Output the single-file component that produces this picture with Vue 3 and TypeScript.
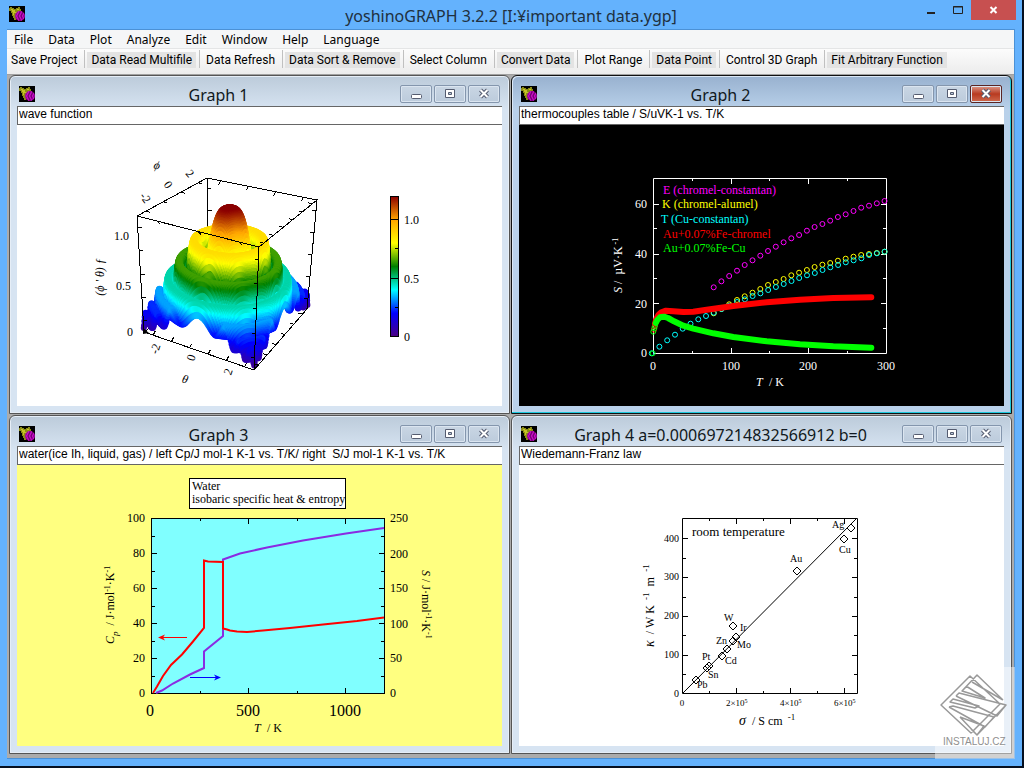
<script setup lang="ts">
import { ref } from 'vue'

type Pt = [number, number]

const menus = ['File', 'Data', 'Plot', 'Analyze', 'Edit', 'Window', 'Help', 'Language']
const tools = [
  'Save Project', 'Data Read Multifile', 'Data Refresh', 'Data Sort & Remove', 'Select Column',
  'Convert Data', 'Plot Range', 'Data Point', 'Control 3D Graph', 'Fit Arbitrary Function',
]
const graphs = ref([
  { id: 1, title: 'Graph 1', note: 'wave function', active: false },
  { id: 2, title: 'Graph 2', note: 'thermocouples table / S/uVK-1 vs. T/K', active: true },
  { id: 3, title: 'Graph 3', note: 'water(ice Ih, liquid, gas) / left Cp/J mol-1 K-1 vs. T/K/ right  S/J mol-1 K-1 vs. T/K', active: false },
  { id: 4, title: 'Graph 4 a=0.000697214832566912 b=0', note: 'Wiedemann-Franz law', active: false },
])

const line = (p: Pt[]) => p.map((q) => q.join(',')).join(' ')

/* ---------- Graph 1: surface ---------- */
const top: Record<string, Pt> = { d: [120, 91], a: [190, 53], b: [300, 75], c: [242, 122] }
const bot: Record<string, Pt> = { d: [127, 207], a: [192, 161], b: [290, 184], c: [237, 245] }

/* u runs along theta, v along phi, both 0..1; z is the height 0..1.2 */
function project(u: number, v: number, z: number): Pt {
  const t = z / 1.2
  const at = (k: string, i: number) => bot[k][i] + (top[k][i] - bot[k][i]) * t
  const mix = (i: number) =>
    at('d', i) * (1 - u) * (1 - v) + at('c', i) * u * (1 - v) + at('a', i) * (1 - u) * v + at('b', i) * u * v
  return [Math.round(mix(0) * 10) / 10, Math.round(mix(1) * 10) / 10]
}
function table(x: number, xs: number[], ys: number[]): number {
  for (let i = 1; i < xs.length; i++) {
    if (x <= xs[i]) return ys[i - 1] + ((ys[i] - ys[i - 1]) * (x - xs[i - 1])) / (xs[i] - xs[i - 1])
  }
  return ys[ys.length - 1]
}
const rr = [0, 0.3, 0.6, 0.9, 1.2, 1.6, 2]
function height(u: number, v: number): number {
  const q = (2 * u - 1) ** 2 + (2 * v - 1) ** 2
  const crest = table(q, rr, [1.22, 0.88, 0.66, 0.48, 0.34, 0.22, 0.16])
  const depth = table(q, rr, [0.6, 0.42, 0.27, 0.2, 0.17, 0.14, 0.12])
  return crest - (depth * (1 - Math.cos((2 * Math.PI * q) / 0.31))) / 2
}
const stops = [[75, 0, 130], [0, 0, 255], [0, 255, 255], [0, 128, 0], [255, 255, 0], [255, 165, 0], [139, 0, 0]]
function colour(z: number): string {
  const k = Math.min(5.999, Math.max(0, z / 0.2))
  const i = Math.floor(k)
  return `rgb(${stops[i].map((c, n) => Math.round(c + (stops[i + 1][n] - c) * (k - i))).join(',')})`
}
/* back-to-front dots, thick enough to close the surface */
const N = 130
const dots: { p: Pt; c: string }[] = []
for (let k = -N; k <= N; k++) {
  for (let i = Math.max(0, k); i <= Math.min(N, N + k); i++) {
    const j = i - k
    const z = height(i / N, j / N)
    dots.push({ p: project(i / N, j / N, z), c: colour(z) })
  }
}
function ticks(from: Pt, to: Pt, dir: Pt, n: number): string {
  let s = ''
  for (let i = 0; i < n; i++) {
    const f = (i + 0.5) / n
    const x = from[0] + (to[0] - from[0]) * f
    const y = from[1] + (to[1] - from[1]) * f
    s += `M${x.toFixed(1)},${y.toFixed(1)}l${dir[0]},${dir[1]}`
  }
  return s
}
const backTicks = ticks(top.d, top.a, [4, 1], 4) + ticks(top.a, top.b, [-2, 4], 4) + ticks(top.a, bot.a, [4, 0], 5)
const frontTicks =
  ticks(top.d, top.c, [3, 3], 3) + ticks(top.c, top.b, [-4, -1], 6) + ticks(top.c, bot.c, [-4, 0], 5) +
  ticks(top.d, bot.d, [4, 0], 5) + ticks(top.b, bot.b, [-4, 0], 5) +
  ticks(bot.d, bot.c, [2, -4], 6) + ticks(bot.c, bot.b, [-4, -1], 6)

/* ---------- Graph 2: thermocouples, points in thirds of a pixel ---------- */
const g2 = (x: number, y: number): Pt => [Math.round((x / 3 + 81) * 10) / 10, Math.round((y / 3 + 40) * 10) / 10]
const series = (x0: number, ys: number[]) => ys.map((y, i) => g2(x0 + i * 23.3, y))
const eType = series(341, [367, 349, 333, 317, 300, 286, 272, 258, 245, 232, 220, 210, 197, 186, 177, 167, 156, 148, 138, 128, 122, 115, 108])
const kType = series(341, [445, 432, 418, 405, 394, 383, 372, 360, 351, 342, 331, 323, 315, 306, 299, 294, 287, 281, 275, 270, 267, 264, 260])
const tType = series(155, [565, 545, 526, 509, 491, 476, 463, 453, 443, 432, 422, 411, 403, 393, 385, 375, 366, 357, 348, 339, 331, 324, 315, 307, 300, 292, 286, 280, 270, 265, 260])
const pts2 = (p: Pt[]) => line(p.map(([x, y]) => g2(x, y)))
const redLine = pts2([[165, 476], [169, 462], [175, 450], [184, 442], [198, 437], [220, 439], [250, 441], [280, 440], [320, 434], [400, 423], [500, 412], [600, 404], [700, 399], [814, 397]])
const greenLine = pts2([[167, 474], [172, 465], [180, 457], [192, 455], [204, 459], [222, 469], [250, 482], [280, 491], [340, 505], [400, 516], [500, 529], [600, 538], [700, 544], [814, 548]])
const thermo = [
  { c: '#ff00ff', pts: eType },
  { c: '#ffff00', pts: kType },
  { c: '#00ffff', pts: tType },
  { c: '#ff0000', pts: [g2(162, 494), g2(164, 484)] },
  { c: '#00ff00', pts: [g2(158, 565), g2(160, 500), g2(163, 490), g2(165, 482)] },
]
const legend = [
  { t: 'E (chromel-constantan)', c: '#ff00ff', x: 144, y: 69 },
  { t: 'K (chromel-alumel)', c: '#ffff00', x: 143, y: 83 },
  { t: 'T (Cu-constantan)', c: '#00ffff', x: 142, y: 98 },
  { t: 'Au+0.07%Fe-chromel', c: '#ff0000', x: 144, y: 113 },
  { t: 'Au+0.07%Fe-Cu', c: '#00ff00', x: 144, y: 127 },
]

/* ---------- Graph 3: water ---------- */
const g3 = (p: Pt[]) => line(p.map(([x, y]): Pt => [Math.round(x / 3 + 73), Math.round((y / 3 + 5) * 2) / 2]))
const entropy = g3([[198, 669], [215, 662], [250, 640], [300, 614], [342, 594], [342, 545], [399, 498], [399, 269], [450, 251], [530, 232], [640, 211], [767, 190], [883, 174]])
const heat = g3([[190, 669], [200, 650], [220, 618], [244, 585], [275, 553], [310, 515], [342, 474], [342, 272], [355, 275], [399, 276], [399, 476], [412, 478], [420, 482], [440, 485], [470, 486], [520, 481], [600, 474], [700, 464], [800, 453], [883, 442]])

/* ---------- Graph 4: metals ---------- */
const metals = [
  { t: 'Ag', x: 332, y: 63, lx: 313, ly: 63 }, { t: 'Cu', x: 325, y: 74, lx: 320, ly: 88 },
  { t: 'Au', x: 278, y: 106, lx: 271, ly: 97 }, { t: 'W', x: 214, y: 161, lx: 205, ly: 156 },
  { t: 'Ir', x: 217, y: 172, lx: 221, ly: 166 }, { t: 'Zn', x: 208, y: 184, lx: 197, ly: 179 },
  { t: 'Mo', x: 214, y: 176, lx: 218, ly: 183 }, { t: 'Cd', x: 203, y: 191, lx: 206, ly: 199 },
  { t: 'Pt', x: 190, y: 201, lx: 183, ly: 195 }, { t: 'Sn', x: 188, y: 203, lx: 189, ly: 213 },
  { t: 'Pb', x: 177, y: 215, lx: 178, ly: 223 },
]
</script>

<template>
  <div class="screen">
    <div class="app">
      <svg width="0" height="0" class="defs" aria-hidden="true">
        <symbol id="grape" viewBox="0 0 16 16">
          <rect width="16" height="16" fill="#000" />
          <path d="M1 1h2v1h2v1h2V2h2V1h2v2h1v2h-2v1H8v3H7v5H5v-2H4v-2H3V7H2V5H0V2h1z" fill="#8c8c14" />
          <path d="M2 3h2v1h2v2h2v1H5v2H4V6H3V4H2zM8 3h2v1H8z" fill="#c4c424" />
          <circle cx="11" cy="10" r="5" fill="#a000a0" />
          <path d="M9 6h1M12 6h1M8 8h1M11 8h1M14 8h1M7 10h1M10 10h1M13 10h1M8 12h1M11 12h1M14 12h1M9 14h1M12 14h1" stroke="#e020e0" />
          <path d="M10 7h1M13 7h1M9 9h1M12 9h1M9 11h1M12 11h1M10 13h1" stroke="#500050" />
        </symbol>
      </svg>
      <header class="caption">
        <svg class="logo" width="16" height="16" aria-hidden="true"><use href="#grape" /></svg>
        <h1>yoshinoGRAPH 3.2.2 [I:¥important data.ygp]</h1>
        <div class="sys">
          <button type="button" aria-label="Minimize"><svg width="10" height="12"><path d="M1 9h8" stroke="#222" stroke-width="2" /></svg></button>
          <button type="button" aria-label="Maximize"><svg width="10" height="12"><path d="M.5 2.500h9v7h-9z M0 3h10" fill="none" stroke="#222" /></svg></button>
          <button type="button" aria-label="Close" class="quit"><svg width="10" height="12"><path d="M1.500 3l6 6M7.500 3l-6 6" stroke="#fff" stroke-width="2" /></svg></button>
        </div>
      </header>

      <div class="client">
        <nav class="menu"><button v-for="m in menus" :key="m" type="button">{{ m }}</button></nav>
        <div class="tools" role="toolbar"><button v-for="t in tools" :key="t" type="button"><span>{{ t }}</span></button></div>

        <main class="desk">
          <section v-for="g in graphs" :key="g.id" class="win" :class="{ active: g.active }">
            <header>
              <svg width="16" height="16" aria-hidden="true"><use href="#grape" /></svg>
              <h2>{{ g.title }}</h2>
              <div class="ctl">
                <button type="button" aria-label="Minimize"><svg width="12" height="12"><rect x="1.500" y="6.500" width="10" height="4" rx="1" fill="#fff" stroke="#555c70" /></svg></button>
                <button type="button" aria-label="Maximize"><svg width="12" height="12"><path d="M1.500 1.500h9v8h-9z" fill="#fff" stroke="#555c70" /><path d="M4.500 4.500h3v2h-3z" fill="#b9c8da" stroke="#555c70" /></svg></button>
                <button type="button" aria-label="Close" class="x"><svg width="12" height="12"><path d="M2.500 2l7 7M9.500 2l-7 7" stroke="#555c70" stroke-width="4" /><path d="M2.500 2l7 7M9.500 2l-7 7" stroke="#fff" stroke-width="2" /></svg></button>
              </div>
            </header>
            <input v-model="g.note" type="text" :aria-label="g.title + ' comment'" />

            <!-- wave function -->
            <svg v-if="g.id === 1" class="plot" viewBox="0 0 485 281" role="img" aria-label="wave function surface">
              <defs>
                <linearGradient id="bar" x1="0" y1="1" x2="0" y2="0">
                  <stop v-for="(s, i) in stops" :key="i" :offset="i / 6" :stop-color="`rgb(${s.join(',')})`" />
                </linearGradient>
              </defs>
              <g fill="none" stroke="#000" shape-rendering="crispEdges">
                <polyline :points="line([top.d, top.a, top.b])" />
                <polyline :points="line([top.a, bot.a, bot.b])" />
                <polyline :points="line([bot.d, bot.a])" />
                <path :d="backTicks" />
              </g>
              <g><circle v-for="(d, i) in dots" :key="i" :cx="d.p[0]" :cy="d.p[1]" r="3" :fill="d.c" /></g>
              <g fill="none" stroke="#000" shape-rendering="crispEdges">
                <polyline :points="line([top.d, top.c, top.b, bot.b, bot.c, bot.d, top.d])" />
                <polyline :points="line([top.c, bot.c])" />
                <path :d="frontTicks" />
              </g>
              <path d="M126 203l6 5-6 1z" />
              <g class="s12">
                <text x="97" y="115">1.0</text><text x="99" y="165">0.5</text><text x="110" y="211">0</text>
                <text transform="translate(125 75) rotate(55)" text-anchor="middle">-2</text>
                <text transform="translate(148 62) rotate(55)" text-anchor="middle">0</text>
                <text transform="translate(170 51) rotate(50)" text-anchor="middle">2</text>
                <text transform="translate(139 44) rotate(15)" text-anchor="middle" font-style="italic">ϕ</text>
                <text transform="translate(142 225) rotate(-72)" text-anchor="middle">-2</text>
                <text transform="translate(178 234) rotate(-72)" text-anchor="middle">0</text>
                <text transform="translate(215 248) rotate(-72)" text-anchor="middle">2</text>
                <text transform="translate(167 258) rotate(15)" text-anchor="middle" font-style="italic">θ</text>
                <text transform="translate(87 152) rotate(-90)" text-anchor="middle" font-style="italic">(ϕ ' θ) ƒ</text>
                <text x="387" y="99">1.0</text><text x="387" y="158">0.5</text><text x="387" y="216">0</text>
              </g>
              <rect x="373.500" y="71.500" width="8" height="140" fill="url(#bar)" stroke="#000" />
              <path d="M374 94.500h8M378 123.500h4M374 153.500h8M378 182.500h4" stroke="#000" />
            </svg>

            <!-- thermocouples -->
            <svg v-else-if="g.id === 2" class="plot dark" viewBox="0 0 485 281" role="img" aria-label="thermocouples chart">
              <path fill="none" stroke="#fff" d="M134.500 53.500h233v175h-233zM134 203.500h4M134 178.500h6M134 153.500h4M134 129.500h6M134 103.500h4M134 79.500h6M368 203.500h-4M368 178.500h-6M368 153.500h-4M368 129.500h-6M368 103.500h-4M368 79.500h-6M173.500 229v-3M212.500 229v-6M250.500 229v-3M289.500 229v-6M328.500 229v-3M173.500 53v3M212.500 53v6M250.500 53v3M289.500 53v6M328.500 53v3" />
              <g v-for="s in thermo" :key="s.c" fill="none" :stroke="s.c"><circle v-for="(p, i) in s.pts" :key="i" :cx="p[0]" :cy="p[1]" r="2.500" /></g>
              <g fill="none" stroke-width="6" stroke-linejoin="round" stroke-linecap="round">
                <polyline :points="redLine" stroke="#f00" /><polyline :points="greenLine" stroke="#0f0" />
              </g>
              <g class="s12"><text v-for="l in legend" :key="l.t" :x="l.x" :y="l.y" :fill="l.c">{{ l.t }}</text></g>
              <g class="s12" fill="#fff">
                <text x="128" y="232" text-anchor="end">0</text><text x="128" y="183" text-anchor="end">20</text><text x="128" y="133" text-anchor="end">40</text><text x="128" y="83" text-anchor="end">60</text>
                <text x="134" y="245" text-anchor="middle">0</text><text x="212" y="245" text-anchor="middle">100</text><text x="289" y="245" text-anchor="middle">200</text><text x="367" y="245" text-anchor="middle">300</text>
                <text x="237" y="261"><tspan font-style="italic">T</tspan></text><text x="250" y="261">/ K</text>
                <text transform="translate(103 168) rotate(-90)"><tspan font-style="italic">S</tspan> / &#160;µV·K<tspan dy="-4" font-size="8"> -1</tspan></text>
              </g>
            </svg>

            <!-- water -->
            <svg v-else-if="g.id === 3" class="plot yellow" viewBox="0 0 485 281" role="img" aria-label="water heat and entropy chart">
              <rect x="172.500" y="13.500" width="156" height="30" fill="#fff" stroke="#000" />
              <rect x="134.500" y="53.500" width="233" height="175" fill="#80ffff" stroke="#000" />
              <path stroke="#000" d="M134 211.500h4M134 193.500h6M134 176.500h4M134 158.500h6M134 141.500h4M134 123.500h6M134 106.500h4M134 88.500h6M134 71.500h4M368 211.500h-4M368 193.500h-6M368 176.500h-4M368 158.500h-6M368 141.500h-4M368 123.500h-6M368 106.500h-4M368 88.500h-6M368 71.500h-4M183.500 229v-3M231.500 229v-6M280.500 229v-3M328.500 229v-6M183.500 53v3M231.500 53v6M280.500 53v3M328.500 53v6" />
              <g fill="none" stroke-width="2"><polyline :points="entropy" stroke="#8a2be2" /><polyline :points="heat" stroke="#f00" /></g>
              <path d="M170 172.500h-28" stroke="#f00" /><path d="M141 172.500l7-3-2 3 2 3z" fill="#f00" />
              <path d="M173 212.500h28" stroke="#00f" /><path d="M204 212.500l-7-3 2 3-2 3z" fill="#00f" />
              <g class="s12">
                <text x="175" y="25">Water</text><text x="175" y="38">isobaric specific heat &amp; entropy</text>
                <text x="128" y="232" text-anchor="end">0</text><text x="128" y="197" text-anchor="end">20</text><text x="128" y="162" text-anchor="end">40</text><text x="128" y="127" text-anchor="end">60</text><text x="128" y="92" text-anchor="end">80</text><text x="128" y="57" text-anchor="end">100</text>
                <text x="373" y="232">0</text><text x="373" y="197">50</text><text x="373" y="163">100</text><text x="373" y="127">150</text><text x="373" y="93">200</text><text x="373" y="57">250</text>
                <text x="237" y="267" font-style="italic">T</text><text x="250" y="267">/ K</text>
                <text transform="translate(97 179) rotate(-90)"><tspan font-style="italic">C</tspan><tspan dy="4" font-size="9" font-style="italic">p</tspan><tspan dy="-4"> &#160;/ J·mol</tspan><tspan dy="-4" font-size="8">-1</tspan><tspan dy="4">·K</tspan><tspan dy="-4" font-size="8">-1</tspan></text>
                <text transform="translate(405 105) rotate(90)"><tspan font-style="italic">S</tspan> / J·mol<tspan dy="-4" font-size="8">-1</tspan><tspan dy="4">·K</tspan><tspan dy="-4" font-size="8">-1</tspan></text>
              </g>
              <g class="s16"><text x="133" y="251">0</text><text x="231" y="251">500</text><text x="328" y="251">1000</text></g>
            </svg>

            <!-- Wiedemann-Franz -->
            <svg v-else class="plot" viewBox="0 0 485 281" role="img" aria-label="Wiedemann-Franz chart">
              <path fill="none" stroke="#000" d="M163.500 53.500h175v175h-175zM163 209.500h4M163 190.500h6M163 170.500h4M163 151.500h6M163 132.500h4M163 112.500h6M163 93.500h4M163 73.500h6M339 209.500h-4M339 190.500h-6M339 170.500h-4M339 151.500h-6M339 132.500h-4M339 112.500h-6M339 93.500h-4M339 73.500h-6M190.500 229v-3M217.500 229v-6M244.500 229v-3M271.500 229v-6M298.500 229v-3M325.500 229v-6M190.500 53v3M217.500 53v6M244.500 53v3M271.500 53v6M298.500 53v3M325.500 53v6M164 228L337 54" />
              <g v-for="m in metals" :key="m.t"><path :d="`M${m.x - 4},${m.y}l4,-4 4,4 -4,4z`" fill="none" stroke="#000" /><text class="s10" :x="m.lx" :y="m.ly">{{ m.t }}</text></g>
              <text class="s13" x="173" y="71">room temperature</text>
              <g class="s12">
                <text x="220" y="260"><tspan font-style="italic" font-size="14">σ</tspan> &#160;/ S cm <tspan dy="-5" font-size="9"> -1</tspan></text>
                <text transform="translate(135 182) rotate(-90)"><tspan font-style="italic" font-size="14">κ</tspan> &#160;/ W K <tspan dy="-5" font-size="9"> -1</tspan><tspan dy="5"> &#160;m </tspan><tspan dy="-5" font-size="9"> -1</tspan></text>
              </g>
              <g class="s10">
                <text x="160" y="232" text-anchor="end">0</text><text x="160" y="193" text-anchor="end">100</text><text x="160" y="154" text-anchor="end">200</text><text x="160" y="115" text-anchor="end">300</text><text x="160" y="77" text-anchor="end">400</text>
              </g>
              <g class="s9">
                <text x="163" y="241" text-anchor="middle">0</text>
                <text v-for="n in 3" :key="n" :x="153 + n * 54" y="241">{{ n * 2 }}×10<tspan dy="-3" font-size="6">5</tspan></text>
              </g>
            </svg>
          </section>
        </main>
      </div>
    </div>

    <svg class="stamp" width="80" height="92" viewBox="0 0 80 92" role="img" aria-label="INSTALUJ.CZ">
      <path d="M10 0h72v92H0V12Q0 0 10 0z" fill="#fff" opacity="0.450" />
      <g fill="none" stroke="#999" stroke-linejoin="round" stroke-width="1.500">
        <path d="M6 38L35 9L65 37L36 66zM68 33L42 8L27 24L50 31L31 19M68 33L37 15M27 24L32 19M21 29L24 26L71 38L62 49L21 29M15 35L18 32L44 39L40 41zM14 40L18 39L59 50L50 60L14 40M25 50L49 59L42 68L25 50M71 38L42 68L36 62" />
      </g>
      <text x="8" y="78">INSTALUJ.CZ</text>
    </svg>
  </div>
</template>

<style>
html,
body {
  background: #000;
}
</style>

<style scoped>
.screen {
  position: relative;
  box-sizing: border-box;
  min-height: 100vh;
  padding: 0 2px 2px 0;
  display: flex;
  background: #061020;
  color: #000;
  overflow: hidden;
}
.defs { position: absolute; }
.app {
  flex: 1;
  min-width: 0;
  display: flex;
  flex-direction: column;
  padding: 0 7px 7px;
  background: #64b2fd;
}
.caption {
  display: flex;
  align-items: flex-start;
  height: 29px;
}
.logo { margin: 6px 0 0 2px; }
h1, h2 { margin: 0; font-weight: 400; white-space: nowrap; text-align: center; flex: 1; }
h1 {
  font: 16px/22px "Noto Sans", sans-serif;
  padding: 5px 0 0 80px;
  color: #203040;
}
button { font: inherit; color: inherit; border: 0; background: none; padding: 0; margin: 0; }
.sys { display: flex; margin-right: -1px; }
.sys button { width: 27px; height: 20px; display: grid; place-items: center; }
.sys .quit { width: 45px; background: #c75050; }
.client {
  flex: 1;
  display: flex;
  flex-direction: column;
  border: 1px solid #4b91d6;
  border-left: 0;
  background: #fff;
}
.menu {
  height: 18px;
  display: flex;
  gap: 15px;
  padding: 0 7px;
  background: #f5f6f7;
  border-bottom: 1px solid #e4e5e6;
  font: 12px/20px "Noto Sans", sans-serif;
}
.tools {
  height: 24px;
  display: flex;
  align-items: flex-start;
  padding-top: 1px;
  background: linear-gradient(#fcfcfc, #ececec);
  border-bottom: 1px solid #a0a0a0;
  font: 12px/16px Roboto, "Liberation Sans", sans-serif;
  white-space: nowrap;
}
.tools button { padding: 1px 3px 0 0; height: 18px; border-right: 1px solid #c0c0c0; }
.tools button:last-child { border: 0; }
.tools span { display: block; height: 16px; line-height: 16px; padding: 0 4px; margin-left: 2px; }
.tools button:first-child span { padding-left: 2px; }
.tools button:nth-child(even) span { background: #e3e3e3; }
.desk {
  flex: 1;
  display: grid;
  grid-template: 1fr 1fr / 1fr 1fr;
  gap: 1px;
  padding: 0 2px 4px;
  background: #ababab;
}
.win {
  display: flex;
  flex-direction: column;
  min-width: 0;
  padding: 0 7px 7px;
  border: 1px solid #555;
  border-radius: 6px 6px 0 0;
  background: linear-gradient(#bccbda, #d7e4f2 34px);
  box-shadow: inset 0 0 0 1px #e6eef7;
}
.win.active {
  border-color: #111;
  background: linear-gradient(#98b1cf, #b9d1ea 34px);
  box-shadow: inset -1px -1px 0 #1cc8dc, inset 1px 1px 0 #dbe8f6;
}
.win header { height: 30px; display: flex; align-items: flex-start; }
.win header > svg { margin: 10px 0 0 2px; }
h2 { font: 16px/22px "Noto Sans", sans-serif; padding: 8px 0 0 2px; color: #101820; }
.win .ctl { display: flex; gap: 2px; margin: 9px 2px 0 0; }
.ctl button {
  width: 32px;
  height: 18px;
  box-sizing: border-box;
  display: grid;
  place-items: center;
  border: 1px solid #8496ad;
  border-radius: 2px;
  background: linear-gradient(#c9d6e4, #bccbdc);
  box-shadow: inset 0 0 0 1px #dbe5f0;
}
.active .x { border-color: #5b2523; background: linear-gradient(#dd9a8b, #b83a20 50%, #cf6a4e); }
input {
  box-sizing: border-box;
  width: 100%;
  height: 19px;
  padding: 0 1px 3px;
  border: 1px solid #666;
  border-right: 0;
  border-radius: 0;
  background: #fff;
  color: #000;
  font: 12px/14px "Liberation Sans", "Noto Sans CJK JP", sans-serif;
  outline: 0;
}
.plot { display: block; flex: 1 1 0; min-height: 0; width: 100%; background: #fff; }
.dark { background: #000; }
.yellow { background: #ffff80; }
text { font-family: "Liberation Serif", serif; white-space: pre; }
.s9 { font-size: 9px; }
.s10 { font-size: 10px; }
.s12 { font-size: 12px; }
.s13 { font-size: 13px; }
.s16 { font-size: 16px; text-anchor: middle; }
.stamp { position: absolute; right: 9px; bottom: 9px; }
.stamp text { font: 10px "Liberation Sans", sans-serif; fill: #909090; }
</style>
